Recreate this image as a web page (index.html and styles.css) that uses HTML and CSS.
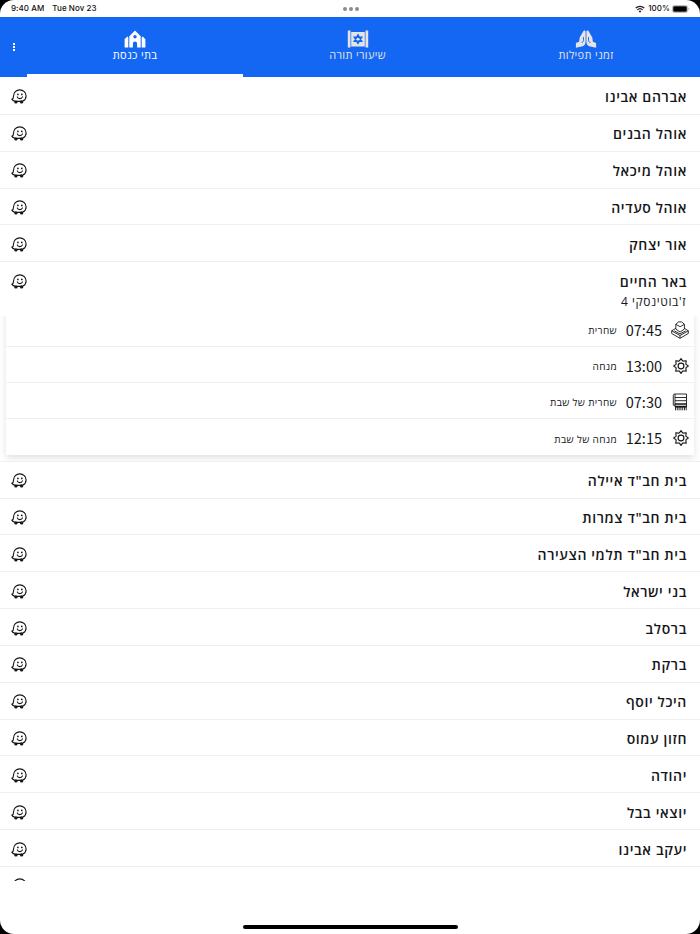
FILE: index.html
```
<!DOCTYPE html>
<html lang="he">
<head>
  <meta charset="UTF-8">
  <meta name="viewport" content="width=device-width, initial-scale=1.0">
  <title>בתי כנסת</title>
  <link rel="stylesheet" href="styles.css">
</head>
<body>
  <svg class="sprite" width="0" height="0">
    <symbol id="waze" viewBox="0 0 16 15">
      <path d="M3.500 12.100C2.300 11.700 1.200 11 .9 10.200 2.200 9.800 2.500 8.800 2.500 7.200 2.500 3.500 5.200.8 8.800.8s6.300 2.700 6.300 6.100c0 2.500-1.300 4.200-3.200 5.200M6 12.400h4" fill="none" stroke="currentColor" stroke-width="1.150" stroke-linecap="round"/>
      <circle cx="4.900" cy="12.900" r="1.700" fill="currentColor"/>
      <circle cx="10.600" cy="12.900" r="1.700" fill="currentColor"/>
      <circle cx="6.900" cy="5.400" r=".85" fill="currentColor"/>
      <circle cx="10.800" cy="5.400" r=".85" fill="currentColor"/>
      <path d="M6.200 7.900c.8 2.300 4.500 2.300 5.300 0" fill="none" stroke="currentColor" stroke-width="1.100" stroke-linecap="round"/>
    </symbol>
    <symbol id="sun" viewBox="0 0 16 16">
      <g fill="none" stroke="currentColor" stroke-width="1.150" stroke-linejoin="round">
        <path d="M8 .7L9.600 2.900Q10 3.200 10.500 3.100L13.200 2.800 12.900 5.500Q12.800 6 13.100 6.400L15.300 8 13.100 9.600Q12.800 10 12.900 10.500L13.200 13.200 10.500 12.900Q10 12.800 9.600 13.100L8 15.300 6.400 13.100Q6 12.800 5.500 12.900L2.800 13.200 3.100 10.500Q3.200 10 2.900 9.600L.7 8 2.900 6.400Q3.200 6 3.100 5.500L2.800 2.800 5.500 3.100Q6 3.200 6.400 2.900z"/>
        <circle cx="8" cy="8" r="2.900"/>
      </g>
    </symbol>
  </svg>

  <div class="screen">
    <div class="status">
      <span>9:40 AM</span>
      <span class="date">Tue Nov 23</span>
      <span class="dots"><i></i><i></i><i></i></span>
      <svg class="wifi" viewBox="0 0 10 8" width="10" height="8">
        <path d="M.7 3.100a6.200 6.200 0 0 1 8.600 0M2.300 4.900a3.900 3.900 0 0 1 5.400 0" fill="none" stroke="#1c1c1c" stroke-width="1.300"/>
        <path d="M3.500 6.100a2.200 2.200 0 0 1 3 0L5 7.700z" fill="#1c1c1c"/>
      </svg>
      <span>100%</span>
      <svg class="battery" viewBox="0 0 18 8" width="18" height="8">
        <rect x=".4" y=".4" width="15.200" height="7.200" rx="2" fill="none" stroke="#999" stroke-width=".7"/>
        <rect x="1.200" y="1.200" width="13.600" height="5.600" rx="1.300" fill="#000"/>
        <path d="M16.500 2.800c1 .3 1 2.100 0 2.400z" fill="#999"/>
      </svg>
    </div>

    <div class="header">
      <div class="menu"><i></i><i></i><i></i></div>
      <div class="tab active">
        <svg viewBox="0 0 22 18" width="22" height="18">
          <path fill="currentColor" fill-rule="evenodd" d="M5.300 17.500V6.300L11 .6l5.700 5.700v11.200h-3.600v-4a2.100 2.100 0 0 0-4.200 0v4zM11 5.100a1.700 1.700 0 1 0 0 3.400 1.700 1.700 0 0 0 0-3.400z"/>
          <path fill="currentColor" d="M.6 17.500V9.200L3.200 6.600l1.100 1v9.900zM17.700 17.500V7.600l1.100-1 2.600 2.600v8.300z"/>
        </svg>
        <span>בתי כנסת</span>
      </div>
      <div class="tab">
        <svg viewBox="0 0 22 18" width="22" height="18">
          <path fill="currentColor" d="M.8.500h2.700v17H.8zM18.500.500h2.700v17h-2.700zM4.200 2h13.600v14.500H4.200z"/>
          <path fill="none" stroke="#1467f2" stroke-width="1.500" d="M11 5l3.700 6.200H7.300zM11 13.400L7.300 7.200h7.400z"/>
        </svg>
        <span>שיעורי תורה</span>
      </div>
      <div class="tab">
        <svg viewBox="0 0 22 18" width="22" height="18">
          <path fill="currentColor" d="M9.300.6c.8 0 1.300.5 1.300 1.300v9.600c0 3-1.500 4.400-3.900 5L.9 17.800V13l3.200-1.300.6-4.100L8.300 1.300c.2-.4.600-.7 1-.7z"/>
          <path fill="currentColor" d="M12.700.6c-.8 0-1.300.5-1.300 1.300v9.600c0 3 1.500 4.400 3.900 5l5.800 1.300V13l-3.200-1.300-.6-4.100-3.600-6.300c-.2-.4-.6-.7-1-.7z"/>
          <path fill="none" stroke="#1467f2" stroke-width=".9" d="M8.500 7v3.800L6.700 13M13.500 7v3.800l1.800 2.200"/>
        </svg>
        <span>זמני תפילות</span>
      </div>
    </div>

    <div class="list">
      <div class="row"><svg class="waze"><use href="#waze"/></svg><span class="name">אברהם אבינו</span></div>
      <div class="row"><svg class="waze"><use href="#waze"/></svg><span class="name">אוהל הבנים</span></div>
      <div class="row"><svg class="waze"><use href="#waze"/></svg><span class="name">אוהל מיכאל</span></div>
      <div class="row"><svg class="waze"><use href="#waze"/></svg><span class="name">אוהל סעדיה</span></div>
      <div class="row"><svg class="waze"><use href="#waze"/></svg><span class="name">אור יצחק</span></div>

      <div class="open">
        <div class="row"><svg class="waze"><use href="#waze"/></svg><span class="name">באר החיים</span></div>
        <div class="address" dir="rtl">ז'בוטינסקי 4</div>
        <div class="times" dir="rtl">
          <div class="time">
            <svg viewBox="0 0 18 18" width="18" height="18">
              <g fill="none" stroke="currentColor" stroke-width=".9" stroke-linejoin="round">
                <path d="M4.800 3.300L7.500.9h3.200l2.700 2.400v4.800L9.100 11 4.800 8.100zM4.800 3.300l4.300 2.400 4.300-2.400M4.800 7.300L.7 9.800 9 14.500l8.300-4.700-3.900-2.500M.7 9.800v2.700L9 17.300l8.300-4.800V9.800M9 14.500v2.800M3.300 9.900L9 12.900l5.700-3"/>
              </g>
            </svg>
            <b>07:45</b><span>שחרית</span>
          </div>
          <div class="time"><svg class="sun"><use href="#sun"/></svg><b>13:00</b><span>מנחה</span></div>
          <div class="time">
            <svg viewBox="0 0 18 18" width="18" height="18">
              <g fill="none" stroke="currentColor" stroke-width=".9">
                <path d="M4 1h11.500v13H4zM4 1C2.800 1 2.300 1.600 2.300 2.700v9.500H4M4 4.500h11.500M4 7.700h11.500"/>
                <path stroke-width="1.300" d="M4 11h11.500M4 13.500h11.500"/>
                <path d="M4.500 14v3.300M6.300 14v3.300M8.100 14v3.300M9.900 14v3.300M11.700 14v3.300M13.500 14v3.300M15.200 14v3.300"/>
              </g>
            </svg>
            <b>07:30</b><span>שחרית של שבת</span>
          </div>
          <div class="time"><svg class="sun"><use href="#sun"/></svg><b>12:15</b><span>מנחה של שבת</span></div>
        </div>
      </div>

      <div class="row"><svg class="waze"><use href="#waze"/></svg><span class="name">בית חב"ד איילה</span></div>
      <div class="row"><svg class="waze"><use href="#waze"/></svg><span class="name">בית חב"ד צמרות</span></div>
      <div class="row"><svg class="waze"><use href="#waze"/></svg><span class="name">בית חב"ד תלמי הצעירה</span></div>
      <div class="row"><svg class="waze"><use href="#waze"/></svg><span class="name">בני ישראל</span></div>
      <div class="row"><svg class="waze"><use href="#waze"/></svg><span class="name">ברסלב</span></div>
      <div class="row"><svg class="waze"><use href="#waze"/></svg><span class="name">ברקת</span></div>
      <div class="row"><svg class="waze"><use href="#waze"/></svg><span class="name">היכל יוסף</span></div>
      <div class="row"><svg class="waze"><use href="#waze"/></svg><span class="name">חזון עמוס</span></div>
      <div class="row"><svg class="waze"><use href="#waze"/></svg><span class="name">יהודה</span></div>
      <div class="row"><svg class="waze"><use href="#waze"/></svg><span class="name">יוצאי בבל</span></div>
      <div class="row"><svg class="waze"><use href="#waze"/></svg><span class="name">יעקב אבינו</span></div>
      <div class="row"><svg class="waze"><use href="#waze"/></svg></div>
    </div>

    <div class="footer"><div class="home"></div></div>
  </div>
</body>
</html>
```
FILE: styles.css
```
* {
  box-sizing: border-box;
}

body {
  margin: 0;
  background: #000;
  font-family: "Open Sans", "Noto Sans", sans-serif;
  color: #16161a;
}

.sprite {
  position: absolute;
}

.screen {
  height: 934px;
  display: flex;
  flex-direction: column;
  background: #fff;
  border-radius: 14px;
  overflow: hidden;
}

/* status bar */
.status {
  position: relative;
  flex: none;
  height: 17px;
  padding: 0 10px 0 11px;
  display: flex;
  align-items: center;
  font: 500 8px/17px Inter, sans-serif;
  letter-spacing: 0.05px;
  color: #111;
}

.date {
  margin-left: 8px;
  margin-right: auto;
}

.dots {
  position: absolute;
  left: 343px;
  top: 7px;
  display: flex;
  gap: 2px;
}

.dots i {
  width: 4px;
  height: 4px;
  border-radius: 50%;
  background: #8b8b8b;
}

.wifi {
  margin-right: 3px;
}

.battery {
  margin-left: 2px;
}

/* header */
.header {
  flex: none;
  height: 60px;
  display: flex;
  background: #1467f2;
  color: #fff;
}

.menu {
  width: 27px;
  padding-left: 1px;
  display: flex;
  flex-direction: column;
  align-items: center;
  justify-content: center;
  gap: 1px;
}

.menu i {
  width: 2px;
  height: 2px;
  background: #fff;
}

.tab {
  flex: none;
  width: 216px;
  padding-top: 13px;
  display: flex;
  flex-direction: column;
  align-items: center;
  font-size: 11px;
  line-height: 13px;
  letter-spacing: 0.35px;
  color: #e4e4e4;
  border-bottom: 3px solid transparent;
}

.tab:nth-child(3) {
  width: 229px;
}

.tab:nth-child(4) {
  width: 228px;
}

.tab.active {
  color: #fff;
  border-bottom-color: #fff;
}

/* synagogue list */
.list {
  flex: none;
  height: 804px;
  padding-top: 1px;
  overflow: hidden;
}

.row {
  height: 36.85px;
  padding: 0 13px 0 11px;
  display: flex;
  justify-content: space-between;
  align-items: center;
  border-bottom: 1px solid #f0f0f0;
}

.waze {
  width: 16px;
  height: 15px;
  margin-top: 2px;
}

.name {
  font-size: 14px;
  font-weight: 600;
  line-height: 20px;
  letter-spacing: 0.62px;
  padding-top: 3px;
}

.open {
  height: 199.5px;
  border-bottom: 1px solid #f0f0f0;
  overflow: hidden;
}

.open .row {
  border-bottom: none;
}

.address {
  height: 17px;
  margin-top: -6px;
  padding-right: 14px;
  font-size: 12px;
  line-height: 17px;
  letter-spacing: 0.6px;
}

.times {
  margin: 1px 6px 0;
  background: #fff;
  box-shadow: 0 3px 7px rgba(0, 0, 0, 0.12);
  clip-path: inset(5px -6px -8px -6px);
}

.time {
  height: 36px;
  padding: 2px 5px 0 0;
  display: flex;
  align-items: center;
  border-bottom: 1px solid #f0f0f0;
}

.time:last-child {
  border-bottom: none;
}

.time svg {
  width: 18px;
  height: 18px;
}

.time .sun {
  width: 16px;
  height: 16px;
}

.time b {
  width: 36px;
  margin-right: 9px;
  font: 400 14.5px/20px "Noto Sans CJK JP", sans-serif;
}

.time .sun + b {
  margin-right: 11px;
}

.time span {
  margin-right: 9px;
  padding-top: 1px;
  font-size: 10px;
  letter-spacing: 0.35px;
}

.footer {
  flex: 1;
  display: flex;
  justify-content: center;
  align-items: flex-end;
  padding-bottom: 5px;
}

.home {
  width: 215px;
  height: 4px;
  border-radius: 2px;
  background: #000;
}
```
